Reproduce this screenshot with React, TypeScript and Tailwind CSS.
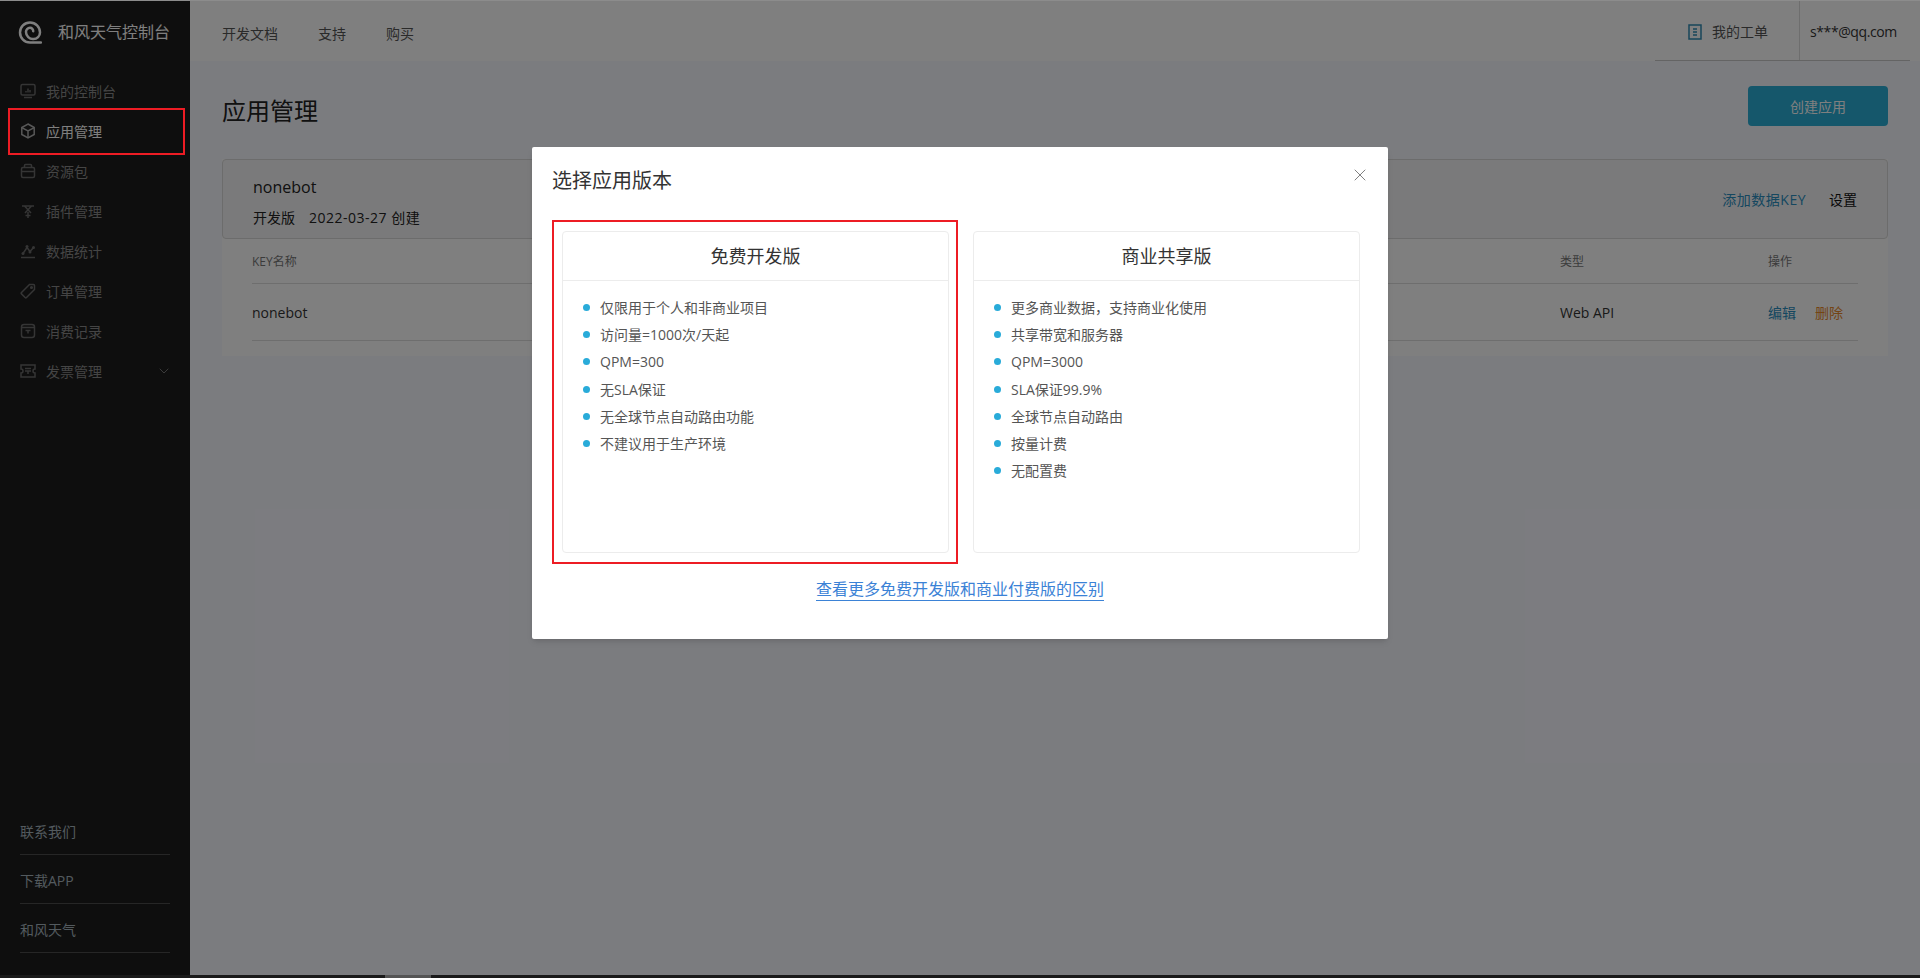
import React from "react";
import { ChevronDown, X } from "lucide-react";

const FONT = "font-['Open_Sans','Noto_Sans_CJK_SC',sans-serif]";

const iconBase = "w-[16px] h-[16px] text-[#6a6a6a]";

const MonitorIcon = () => (
  <svg viewBox="0 0 16 16" fill="none" stroke="currentColor" strokeWidth="1.5" className={iconBase}>
    <rect x="1" y="1.5" width="14" height="10.5" rx="1.5" />
    <path d="M4 14.5h8M6 9.5V8M8 9.5V5.5M10 9.5V7" />
  </svg>
);
const BoxIcon = () => (
  <svg viewBox="0 0 16 16" fill="none" stroke="currentColor" strokeWidth="1.5" className="w-[16px] h-[16px] text-[#b0b0b0]">
    <path d="M8 1l6.2 3.5v7L8 15l-6.2-3.5v-7z" />
    <path d="M2.2 4.8L8 8l5.8-3.2M8 8v6.6" />
  </svg>
);
const BagIcon = () => (
  <svg viewBox="0 0 16 16" fill="none" stroke="currentColor" strokeWidth="1.5" className={iconBase}>
    <rect x="1.5" y="4.5" width="13" height="10" rx="1.5" />
    <path d="M4.5 4.5V2.5a1 1 0 011-1h5a1 1 0 011 1v2M1.5 8.5h13" />
  </svg>
);
const PluginIcon = () => (
  <svg viewBox="0 0 16 16" fill="none" stroke="currentColor" strokeWidth="1.5" className={iconBase}>
    <path d="M2 3h12M4.5 3L11 10M11.5 3L5 10M8 9v6M5.5 12.5h5" />
  </svg>
);
const ChartIcon = () => (
  <svg viewBox="0 0 16 16" fill="none" stroke="currentColor" strokeWidth="1.5" className={iconBase}>
    <path d="M1 14.5h14M3 10.5L7 4.5l3 4 3.5-4" />
    <circle cx="7" cy="3.5" r="1.5" fill="currentColor" stroke="none" />
    <circle cx="13.5" cy="4.5" r="1.5" fill="currentColor" stroke="none" />
    <circle cx="3" cy="10.5" r="1.5" fill="currentColor" stroke="none" />
    <circle cx="10" cy="9" r="1.5" fill="currentColor" stroke="none" />
  </svg>
);
const TagIcon = () => (
  <svg viewBox="0 0 16 16" fill="none" stroke="currentColor" strokeWidth="1.5" className={iconBase}>
    <path d="M9.5 1.5h4a1 1 0 011 1v4L6.5 14.5a1 1 0 01-1.4 0l-3.6-3.6a1 1 0 010-1.4z" />
    <circle cx="11.5" cy="4.5" r="0.8" />
  </svg>
);
const ReceiptIcon = () => (
  <svg viewBox="0 0 16 16" fill="none" stroke="currentColor" strokeWidth="1.5" className={iconBase}>
    <rect x="1.5" y="1.5" width="13" height="13" rx="2.5" />
    <path d="M2 4.5h12M5.5 7.5h5M8 7.5v3" />
  </svg>
);
const TicketIcon = () => (
  <svg viewBox="0 0 16 16" fill="none" stroke="currentColor" strokeWidth="1.5" className={iconBase}>
    <path d="M1 2h14v4a2 2 0 000 4v4H1v-4a2 2 0 000-4z" />
    <path d="M5 5.5h6M5 8h6M8 8v3" />
  </svg>
);

const Logo = () => (
  <svg viewBox="0 0 24 24" fill="none" stroke="#ffffff" strokeWidth="2.5" strokeLinecap="round" className="w-[24px] h-[24px]">
    <path d="M23 22.5H12A10 10 0 1122 12.5a6.5 6.5 0 01-6.5 6.5A7 7 0 018 12a4 4 0 014-4.2 3.2 3.2 0 013.2 3.4" />
  </svg>
);

const MENU = [
  { label: "我的控制台", icon: <MonitorIcon /> },
  { label: "应用管理", icon: <BoxIcon />, active: true },
  { label: "资源包", icon: <BagIcon /> },
  { label: "插件管理", icon: <PluginIcon /> },
  { label: "数据统计", icon: <ChartIcon /> },
  { label: "订单管理", icon: <TagIcon /> },
  { label: "消费记录", icon: <ReceiptIcon /> },
  { label: "发票管理", icon: <TicketIcon />, more: true },
];

const FREE = ["仅限用于个人和非商业项目", "访问量=1000次/天起", "QPM=300", "无SLA保证", "无全球节点自动路由功能", "不建议用于生产环境"];
const PAID = ["更多商业数据，支持商业化使用", "共享带宽和服务器", "QPM=3000", "SLA保证99.9%", "全球节点自动路由", "按量计费", "无配置费"];

const PlanCard = ({ title, items }: { title: string; items: string[] }) => (
  <div className="w-[387px] h-[322px] bg-white border border-[#ececec] rounded-[4px]">
    <div className="h-[49px] flex items-center justify-center text-[18px] text-[#333] border-b border-[#ececec]">{title}</div>
    <ul className="pt-[13px] pl-[20px]">
      {items.map((item) => (
        <li key={item} className="h-[27.2px] flex items-center gap-[10px] text-[14px] text-[#555]">
          <span className="w-[7px] h-[7px] rounded-full bg-[#29abd9]" />
          {item}
        </li>
      ))}
    </ul>
  </div>
);

export default function App() {
  return (
    <div className={`relative h-[978px] w-full overflow-hidden flex bg-[#f7f8ff] ${FONT}`}>
      {/* Sidebar */}
      <aside className="w-[190px] shrink-0 bg-[#1c1c1c] flex flex-col h-[975px]">
        <div className="h-[61px] pt-[3px] flex items-center pl-[18px] gap-[16px] text-[16px] text-[#fff]">
          <Logo />
          和风天气控制台
        </div>
        <nav className="mt-[10px]">
          {MENU.map((m) => (
            <div
              key={m.label}
              className={`h-[40px] flex items-center pl-[20px] gap-[10px] text-[14px] ${m.active ? "text-white" : "text-[#8a8a8a]"}`}
            >
              {m.icon}
              <span>{m.label}</span>
              {m.more && <ChevronDown className="ml-auto mr-[18px] w-[16px] h-[16px] text-[#777]" strokeWidth={1.5} />}
            </div>
          ))}
        </nav>
        <div className="mt-auto mb-[22px] mx-[20px] text-[14px] text-[#a6b4bc]">
          <div className="h-[49px] pt-[3px] flex items-center border-b border-[#4c4c4c]">联系我们</div>
          <div className="h-[49px] pt-[3px] flex items-center border-b border-[#4c4c4c]">下载APP</div>
          <div className="h-[49px] pt-[3px] flex items-center border-b border-[#4c4c4c]">和风天气</div>
        </div>
      </aside>

      {/* Main */}
      <main className="flex-1 h-[975px] flex flex-col">
        <header className="h-[61px] bg-white flex items-center text-[14px] text-[#555] pl-[32px]">
          <span className="pt-[5px]">开发文档</span>
          <span className="ml-[40px] pt-[5px]">支持</span>
          <span className="ml-[40px] pt-[5px]">购买</span>
          <div className="ml-auto mr-[10px] flex h-full border-b border-[#c8c8c8]">
            <div className="flex items-center gap-[10px] pl-[33px] pr-[31px] pt-[3px] text-[#555]">
              <svg viewBox="0 0 14 16" fill="none" stroke="#2f8cb5" strokeWidth="1.5" className="w-[14px] h-[16px]">
                <rect x="1" y="1" width="12" height="14" />
                <path d="M5 5h4M5 8h4M5 11h4" />
              </svg>
              我的工单
            </div>
            <div className="flex items-center pl-[10px] w-[111px] pt-[3px] border-l border-[#ddd] text-[#333] tracking-[-0.4px]">s***@qq.com</div>
          </div>
        </header>

        <section className="px-[32px]">
          <div className="flex items-center justify-between h-[86px]">
            <h1 className="pt-[14px] text-[24px] text-[#222]">应用管理</h1>
            <button className="mt-[4px] w-[140px] h-[40px] rounded-[4px] bg-[#2aaed6] text-[14px] text-white">创建应用</button>
          </div>
          <div className="mt-[12px] bg-white">
            <div className="h-[80px] bg-[#f5f5f7] border border-[#d8d8d8] rounded-[4px] flex items-center justify-between pl-[30px] pr-[30px]">
              <div className="pt-[4px]">
                <div className="text-[16px] leading-[24px] text-[#222]">nonebot</div>
                <div className="mt-[9px] text-[14px] leading-[20px] text-[#222]">
                  开发版<span className="ml-[14px] tracking-[0.5px]">2022-03-27 创建</span>
                </div>
              </div>
              <div className="flex items-center text-[14px]">
                <span className="text-[#2a8ec0] tracking-[0.5px]">添加数据KEY</span>
                <span className="ml-[23px] text-[#111]">设置</span>
              </div>
            </div>
            <div className="px-[30px] pb-[15px]">
              <div className="h-[45px] pt-[2px] flex items-center text-[12px] text-[#777] border-b border-[#ddd]">
                <span className="w-[1308px]">KEY名称</span>
                <span className="w-[208px]">类型</span>
                <span>操作</span>
              </div>
              <div className="h-[57px] flex items-center text-[14px] text-[#333] border-b border-[#ddd]">
                <span className="w-[1308px]">nonebot</span>
                <span className="w-[208px]">Web API</span>
                <span className="text-[#2a8ec0]">编辑</span>
                <span className="ml-[19px] text-[#e8892b]">删除</span>
              </div>
            </div>
          </div>
        </section>
      </main>

      {/* Mask */}
      <div className="absolute inset-0 bg-black/50" />
      <div className="absolute left-0 right-0 top-0 h-px bg-[#8c8c8c]" />
      <div className="absolute left-0 right-0 bottom-0 h-[3px] bg-[#1a1a1a]">
        <div className="absolute left-[385px] w-[46px] h-full bg-[#555]" />
      </div>

      {/* Dialog */}
      <div className="absolute left-[532px] top-[147px] w-[856px] h-[492px] bg-white rounded-[2px] shadow-md pl-[30px]">
        <h2 className="-ml-[10px] pt-[20px] text-[20px] leading-[28px] text-[#333]">选择应用版本</h2>
        <X className="absolute right-[18px] top-[18px] w-[20px] h-[20px] text-[#666]" strokeWidth={1} />
        <div className="mt-[36px] flex gap-[24px]">
          <PlanCard title="免费开发版" items={FREE} />
          <PlanCard title="商业共享版" items={PAID} />
        </div>
        <div className="mt-[24px] pr-[30px] text-center">
          <a className="text-[16px] text-[#3b82d6] border-b border-[#3b82d6]">查看更多免费开发版和商业付费版的区别</a>
        </div>
      </div>

      {/* Red annotation boxes */}
      <div className="absolute left-[8px] top-[108px] w-[177px] h-[47px] border-2 border-[#ed1c24]" />
      <div className="absolute left-[552px] top-[220px] w-[406px] h-[344px] border-2 border-[#ed1c24]" />
    </div>
  );
}
